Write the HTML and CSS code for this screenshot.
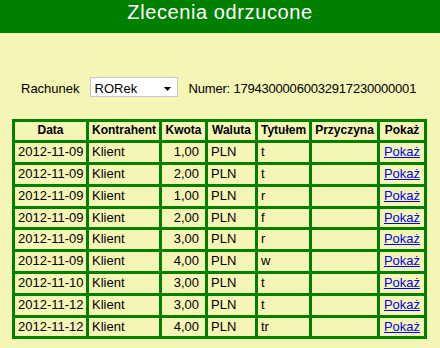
FILE: index.html
```html
<!DOCTYPE html>
<html lang="pl">
<head>
<meta charset="utf-8">
<title>Zlecenia odrzucone</title>
<link rel="stylesheet" href="styles.css">
</head>
<body>
<h1 class="title">Zlecenia odrzucone</h1>
<div class="account">
  <span class="label">Rachunek</span>
  <div class="select">
    <span>RORek</span>
    <svg class="arrow" width="7" height="4" viewBox="0 0 7 4"><polygon points="0,0 7,0 3.5,4" fill="#000"/></svg>
  </div>
  <span class="number">Numer: 17943000060032917230000001</span>
</div>
<table class="orders">
  <colgroup>
    <col class="c-date"><col class="c-who"><col class="c-amt"><col class="c-cur"><col class="c-title"><col class="c-why"><col class="c-show">
  </colgroup>
  <thead>
    <tr><th>Data</th><th>Kontrahent</th><th>Kwota</th><th>Waluta</th><th>Tytułem</th><th>Przyczyna</th><th>Pokaż</th></tr>
  </thead>
  <tbody>
    <tr><td>2012-11-09</td><td>Klient</td><td class="num">1,00</td><td>PLN</td><td>t</td><td></td><td class="show"><a href="#">Pokaż</a></td></tr>
    <tr><td>2012-11-09</td><td>Klient</td><td class="num">2,00</td><td>PLN</td><td>t</td><td></td><td class="show"><a href="#">Pokaż</a></td></tr>
    <tr><td>2012-11-09</td><td>Klient</td><td class="num">1,00</td><td>PLN</td><td>r</td><td></td><td class="show"><a href="#">Pokaż</a></td></tr>
    <tr><td>2012-11-09</td><td>Klient</td><td class="num">2,00</td><td>PLN</td><td>f</td><td></td><td class="show"><a href="#">Pokaż</a></td></tr>
    <tr><td>2012-11-09</td><td>Klient</td><td class="num">3,00</td><td>PLN</td><td>r</td><td></td><td class="show"><a href="#">Pokaż</a></td></tr>
    <tr><td>2012-11-09</td><td>Klient</td><td class="num">4,00</td><td>PLN</td><td>w</td><td></td><td class="show"><a href="#">Pokaż</a></td></tr>
    <tr><td>2012-11-10</td><td>Klient</td><td class="num">3,00</td><td>PLN</td><td>t</td><td></td><td class="show"><a href="#">Pokaż</a></td></tr>
    <tr><td>2012-11-12</td><td>Klient</td><td class="num">3,00</td><td>PLN</td><td>t</td><td></td><td class="show"><a href="#">Pokaż</a></td></tr>
    <tr><td>2012-11-12</td><td>Klient</td><td class="num">4,00</td><td>PLN</td><td>tr</td><td></td><td class="show"><a href="#">Pokaż</a></td></tr>
  </tbody>
</table>
</body>
</html>
```
FILE: styles.css
```css
html, body {
  margin: 0;
  padding: 0;
  background: #f5f5b6;
  font-family: "Liberation Sans", Arial, sans-serif;
  font-size: 13px;
  color: #000;
}

.title {
  margin: 0;
  height: 33px;
  box-sizing: border-box;
  padding: 0;
  background: #008000;
  color: #fff;
  font-size: 20px;
  font-weight: normal;
  letter-spacing: 0.6px;
  line-height: 25px;
  text-align: center;
}

.account {
  display: flex;
  align-items: baseline;
  margin: 44px 0 0 21px;
  height: 20px;
  line-height: 15px;
}

.label {
  margin-right: 10px;
}

.select {
  position: relative;
  width: 88px;
  height: 20px;
  box-sizing: border-box;
  border: 1px solid #c8c8c8;
  background: #fff;
  padding: 3px 0 0 4px;
  margin-right: 11px;
}

.arrow {
  position: absolute;
  right: 6px;
  top: 9px;
}

.number {
  letter-spacing: -0.2px;
}

.orders {
  margin: 22px 0 0 12px;
  width: 415px;
  table-layout: fixed;
  border-collapse: separate;
  border-spacing: 0;
  border-left: 3px solid #008000;
  border-top: 3px solid #008000;
}

.c-date { width: 74px; }
.c-who { width: 73px; }
.c-amt { width: 46px; }
.c-cur { width: 50px; }
.c-title { width: 54px; }
.c-why { width: 68px; }
.c-show { width: 47px; }

.orders th,
.orders td {
  border-right: 3px solid #008000;
  border-bottom: 3px solid #008000;
  white-space: nowrap;
  overflow: visible;
}

.orders th {
  font-size: 12px;
  font-weight: bold;
  text-align: center;
  line-height: 15px;
  padding: 1px 0 2.3px;
}

.orders td {
  text-align: left;
  line-height: 15px;
  padding: 1px 3px 2.8px;
}

.orders td.num {
  text-align: right;
  padding-right: 6px;
}

.orders td.show {
  text-align: center;
  padding: 1px 0 2.8px;
}

.orders a {
  color: #0000ee;
  text-decoration: underline;
}
```
